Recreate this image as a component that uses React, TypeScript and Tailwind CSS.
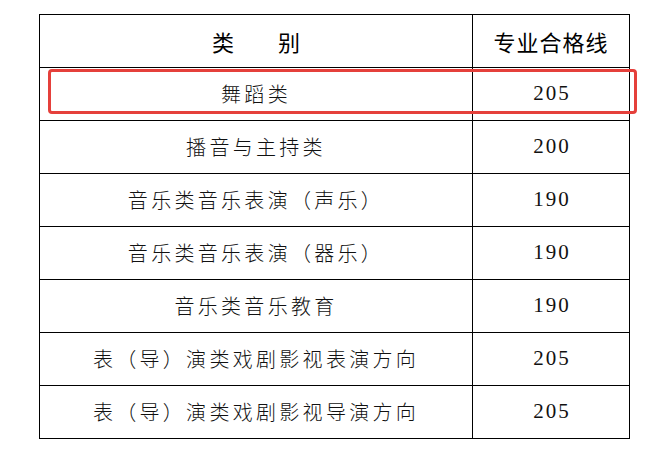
/** Score threshold table — category name on the left, professional pass line on the right. */

const rows: { name: string; score: string }[] = [
  { name: "舞蹈类", score: "205" },
  { name: "播音与主持类", score: "200" },
  { name: "音乐类音乐表演（声乐）", score: "190" },
  { name: "音乐类音乐表演（器乐）", score: "190" },
  { name: "音乐类音乐教育", score: "190" },
  { name: "表（导）演类戏剧影视表演方向", score: "205" },
  { name: "表（导）演类戏剧影视导演方向", score: "205" },
];

const cjkSans = "font-['Noto_Sans_CJK_SC','Noto_Sans',sans-serif]";

export default function App() {
  return (
    <div className="w-[648px] h-[449px] bg-white pt-[14px] pl-[39px] overflow-hidden">
      <div className="relative w-[591px]">
        <table className="w-full border-collapse text-black">
          <thead>
            <tr className="h-[53px]">
              <th
                className={`w-[433px] border border-black p-0 text-center align-middle text-[22px] font-normal ${cjkSans}`}
              >
                类　　别
              </th>
              <th
                className={`border border-black p-0 text-center align-middle text-[22px] font-normal tracking-[1px] ${cjkSans}`}
              >
                专业合格线
              </th>
            </tr>
          </thead>
          <tbody>
            {rows.map((row, i) => (
              <tr key={i} className="h-[53px]">
                <td
                  className={`border border-black p-0 text-center align-middle text-[20px] font-light tracking-[3.3px] text-[#111] ${cjkSans}`}
                >
                  {row.name}
                </td>
                <td className="border border-black p-0 pl-[2px] text-center align-middle font-['Liberation_Serif',serif] text-[21px] tracking-[2px] text-[#111]">
                  {row.score}
                </td>
              </tr>
            ))}
          </tbody>
        </table>

        {/* highlight box drawn over the first data row */}
        <div className="pointer-events-none absolute left-[9px] top-[55px] w-[589px] h-[45px] rounded-[4px] border-[3px] border-[#e5403b]" />
      </div>
    </div>
  );
}
